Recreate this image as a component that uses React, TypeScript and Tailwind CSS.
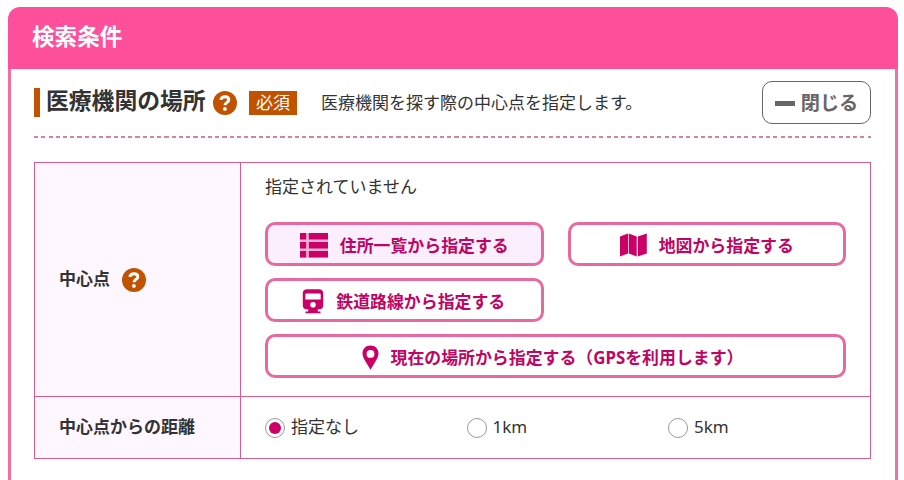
import type { ReactNode } from "react";

function HelpIcon() {
  return (
    <span className="flex h-6 w-6 shrink-0 items-center justify-center rounded-full bg-[#c05200]">
      <svg viewBox="0 0 24 24" className="h-6 w-6" fill="none" stroke="#fff">
        <path d="M7.900 8.900C8.200 6.500 9.900 5.700 12 5.700c2.400 0 3.800 1.200 3.800 3 0 2.700-3.800 2.700-3.800 5.600" strokeWidth="3" />
        <circle cx="11.900" cy="17.900" r="1.900" fill="#fff" stroke="none" />
      </svg>
    </span>
  );
}

function ListIcon() {
  return (
    <svg viewBox="0 0 28 25" className="h-[25px] w-7 shrink-0" fill="#cb0067">
      <path d="M0 0h28v24.600H0z" opacity=".25" />
      <path d="M0 0h6.200v6.500H0zM8.800 0H28v6.500H8.800zM0 9h6.200v6.500H0zM8.800 9H28v6.500H8.800zM0 18h6.200v6.600H0zM8.800 18H28v6.600H8.800z" />
    </svg>
  );
}

function MapIcon() {
  return (
    <svg viewBox="0 0 27 24" className="h-6 w-[27px] shrink-0" fill="#cb0067">
      <path d="M0 3.400 8 .4v20L0 23.400zM8.700.4l8 3v20l-8-3zM17.800 3.400l9-3v20l-9 3z" />
    </svg>
  );
}

function TrainIcon() {
  return (
    <svg viewBox="0 0 22 25" className="h-[25px] w-[22px] shrink-0" fill="#cb0067">
      <path
        fillRule="evenodd"
        d="M5 .3h12c2.500 0 4.200 1.600 4.200 4v12.200c0 2.200-1.400 3.700-3.800 3.700H4.600C2.200 20.200.8 18.700.8 16.500V4.300C.8 1.900 2.500.3 5 .3zM4.500 4.500Q3.300 4.500 3.300 5.700v4.800h15.400V5.700q0-1.200-1.200-1.200zM11 12.900a2.800 2.800 0 1 0 0 5.600 2.800 2.800 0 0 0 0-5.600z"
      />
      <path d="M6.200 20h9.600v2.400h2.700v1.900h-15v-1.900h2.700z" />
    </svg>
  );
}

function PinIcon() {
  return (
    <svg viewBox="0 0 17 25" className="h-[25px] w-[17px] shrink-0" fill="#cb0067">
      <path
        fillRule="evenodd"
        d="M8.500.4C3.800.4.5 3.800.5 8.300c0 2.500.9 4.500 2.300 7L8.500 24.800l5.700-9.500c1.400-2.500 2.300-4.500 2.300-7C16.500 3.800 13.200.4 8.500.4zM8.500 5a3.900 3.900 0 1 1 0 7.800 3.900 3.900 0 0 1 0-7.800z"
      />
    </svg>
  );
}

function PlaceButton({ icon, children, className = "" }: { icon: ReactNode; children: ReactNode; className?: string }) {
  return (
    <button
      type="button"
      className={`flex h-11 items-center justify-center gap-3 whitespace-nowrap rounded-[10px] border-[3px] border-[#e8699f] pt-0.5 text-[16.900px] font-bold leading-6 text-[#bf0564] ${className}`}
    >
      {icon}
      <span className="mt-px">{children}</span>
    </button>
  );
}

function Radio({ label, checked = false }: { label: string; checked?: boolean }) {
  return (
    <label className="flex w-[201.500px] items-center gap-1.5">
      <span className="flex h-5 w-5 shrink-0 items-center justify-center rounded-full border border-[#999] bg-white">
        {checked && <span className="h-3 w-3 rounded-full bg-[#cb0067]" />}
      </span>
      <span className="-mt-0.5">{label}</span>
    </label>
  );
}

export default function App() {
  return (
    <div className="h-[480px] overflow-hidden bg-white pl-[7.500px] pr-1.5 pt-[7px] font-['Noto_Sans','Noto_Sans_CJK_JP',sans-serif] text-[17px] leading-6 text-[#333]">
      <main>
        <h1 className="flex h-[62px] items-center rounded-t-xl bg-[#fd4f9a] pl-[24.500px] text-[22.600px] font-bold text-white">
          <span className="-mt-[3px]">検索条件</span>
        </h1>
        <section className="h-[440px] border-x-[3px] border-[#f070a6] pl-[23.500px] pr-6">
          <header className="flex h-[67px] items-center">
            <div className="h-[29px] w-1.5 bg-[#c05200]" />
            <h2 className="-mt-[3px] ml-1.5 w-[161px] whitespace-nowrap text-[22.800px] font-bold leading-7">医療機関の場所</h2>
            <span className="ml-1.5"><HelpIcon /></span>
            <span className="ml-3 flex h-6 w-12 items-center justify-center bg-[#c05200] text-[17px] text-white">必須</span>
            <p className="ml-[24px]">医療機関を探す際の中心点を指定します。</p>
            <button
              type="button"
              className="ml-auto flex h-[43px] w-[109px] items-center justify-center gap-1.5 rounded-[10px] border border-[#666] text-[19.200px] font-bold text-[#666]"
            >
              <span className="mt-0.5 h-[5px] w-5 bg-[#666]" />
              閉じる
            </button>
          </header>
          <div className="h-0.5 bg-[repeating-linear-gradient(90deg,#cf83ab_0_4px,transparent_4px_7.250px)]" />
          <div className="mt-6 grid h-[297px] grid-cols-[206px_1fr] grid-rows-[234px_1fr] border border-[#d75c96]">
            <div className="flex items-center gap-3 border-b border-r border-[#d75c96] bg-[#fef7ff] pl-6 font-bold">
              <span className="-mt-0.5">中心点</span>
              <HelpIcon />
            </div>
            <div className="border-b border-[#d75c96] pl-6 pr-6 pt-3">
              <p>指定されていません</p>
              <div className="mt-[23px] grid grid-cols-2 gap-x-6 gap-y-3">
                <PlaceButton icon={<ListIcon />} className="bg-[#fbeefd]">住所一覧から指定する</PlaceButton>
                <PlaceButton icon={<MapIcon />}>地図から指定する</PlaceButton>
                <PlaceButton icon={<TrainIcon />} className="pr-px">鉄道路線から指定する</PlaceButton>
                <PlaceButton icon={<PinIcon />} className="col-span-2 pr-1.5">現在の場所から指定する（GPSを利用します）</PlaceButton>
              </div>
            </div>
            <div className="flex items-center border-r border-[#d75c96] bg-[#fef7ff] pl-6 font-bold">
              <span className="-mt-0.5">中心点からの距離</span>
            </div>
            <div className="flex items-center pl-6">
              <Radio label="指定なし" checked />
              <Radio label="1km" />
              <Radio label="5km" />
            </div>
          </div>
        </section>
      </main>
    </div>
  );
}
